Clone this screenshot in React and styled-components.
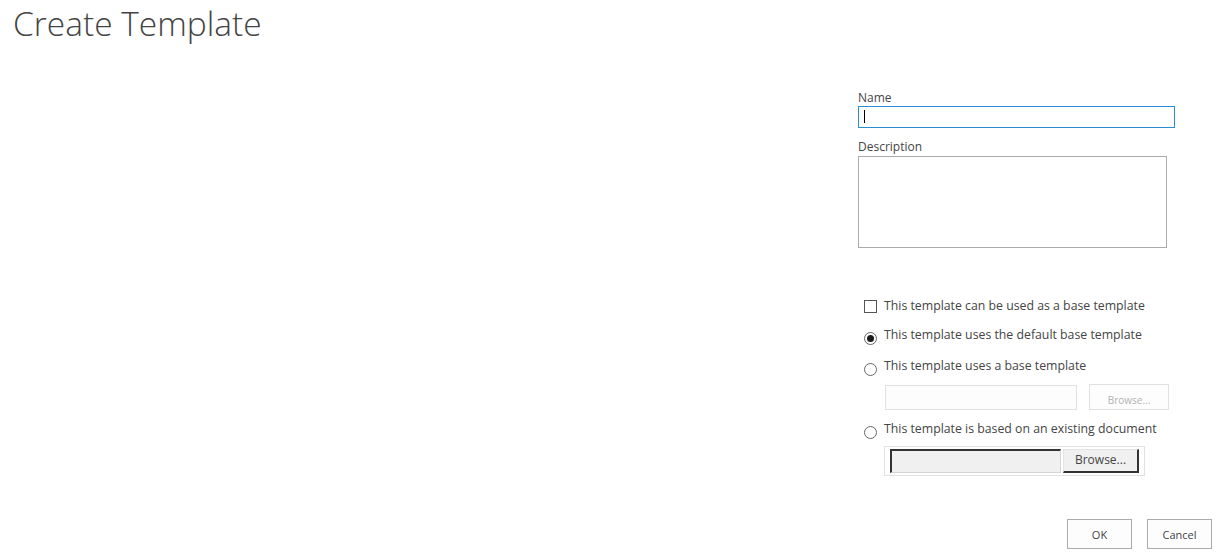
import styled, { createGlobalStyle } from "styled-components";

const GlobalStyle = createGlobalStyle`
  html, body {
    margin: 0;
    padding: 0;
    background: #ffffff;
  }
  body {
    font-family: "Open Sans", "Noto Sans", "Liberation Sans", sans-serif;
    color: #444444;
  }
`;

const Page = styled.div`
  width: 1222px;
  height: 558px;
  overflow: hidden;
  display: flex;
  flex-direction: column;
`;

const Title = styled.h1`
  margin: 0;
  padding-left: 13px;
  font-size: 33.5px;
  font-weight: 300;
  line-height: 46px;
  color: #444444;
`;

const Body = styled.div`
  display: flex;
  justify-content: flex-end;
  padding: 44px 10px 0 0;
`;

const Column = styled.div`
  width: 354px;
  display: flex;
  flex-direction: column;
`;

const Label = styled.label`
  display: block;
  font-size: 12px;
  line-height: 16px;
  margin-top: ${(p) => p.$top || 0}px;
`;

const TextBox = styled.div`
  position: relative;
  box-sizing: border-box;
  width: 317px;
  height: 22px;
  border: 1px solid #2a8dd4;
  background: #fff;
`;

const Caret = styled.span`
  position: absolute;
  left: 5px;
  top: 3px;
  width: 1px;
  height: 13px;
  background: #000;
`;

const TextArea = styled.div`
  box-sizing: border-box;
  width: 309px;
  height: 92px;
  margin-top: 1px;
  border: 1px solid #ababab;
  background: #fff;
`;

const Options = styled.div`
  display: flex;
  flex-direction: column;
  padding-left: 6px;
  margin-top: 50px;
`;

const Option = styled.div`
  display: flex;
  align-items: flex-start;
  gap: 7px;
  font-size: 12.3px;
  line-height: 16px;
  height: 16px;
  margin-top: ${(p) => p.$top || 0}px;
  color: #444;
`;

const Check = styled.span`
  box-sizing: border-box;
  width: 13px;
  height: 13px;
  margin-top: 2px;
  border: 1px solid #555;
  background: #fff;
  flex: none;
`;

const Radio = styled.span`
  box-sizing: border-box;
  width: 13px;
  height: 13px;
  margin-top: 5px;
  border: 1px solid #666;
  border-radius: 50%;
  background: #fff;
  flex: none;
  display: flex;
  align-items: center;
  justify-content: center;

  &::after {
    content: "";
    width: 7px;
    height: 7px;
    border-radius: 50%;
    background: ${(p) => (p.$checked ? "#1a1a1a" : "transparent")};
  }
`;

const SubRow = styled.div`
  display: flex;
  align-items: flex-start;
  gap: 12px;
  margin: ${(p) => p.$top || 0}px 0 0 21px;
`;

const DisabledField = styled.div`
  box-sizing: border-box;
  width: 192px;
  height: 25px;
  margin-top: 1px;
  border: 1px solid #e1e1e1;
  background: #fdfdfd;
`;

const DisabledButton = styled.div`
  box-sizing: border-box;
  width: 80px;
  height: 26px;
  border: 1px solid #e1e1e1;
  background: #fdfdfd;
  color: #b1b1b1;
  font-size: 10px;
  text-align: center;
  padding-top: 8px;
  line-height: 14px;
`;

const FileBox = styled.div`
  box-sizing: border-box;
  width: 261px;
  height: 30px;
  margin: ${(p) => p.$top || 0}px 0 0 20px;
  padding: 2px 5px 0 5px;
  border: 1px solid #e1e1e1;
  display: flex;
  gap: 2px;
`;

const FileField = styled.div`
  box-sizing: border-box;
  width: 171px;
  height: 24px;
  background: #f0f0f0;
  border-top: 2px solid #333;
  border-left: 2px solid #333;
  border-right: 1px solid #d4d4d4;
  border-bottom: 1px solid #d4d4d4;
`;

const FileButton = styled.div`
  box-sizing: border-box;
  width: 76px;
  height: 24px;
  background: #f0f0f0;
  border-top: 1px solid #e3e3e3;
  border-left: 1px solid #e3e3e3;
  border-right: 2px solid #333;
  border-bottom: 2px solid #333;
  color: #444;
  font-size: 12px;
  line-height: 20px;
  text-align: center;
`;

const Actions = styled.div`
  display: flex;
  justify-content: flex-end;
  gap: 15px;
  margin-top: 43px;
`;

const Button = styled.button`
  box-sizing: border-box;
  width: 65px;
  height: 30px;
  border: 1px solid #ababab;
  background: #fdfdfd;
  color: #444;
  font-family: inherit;
  font-size: 11px;
  padding: 0;
`;

const App = () => {
  return (
    <Page>
      <GlobalStyle />
      <Title>Create Template</Title>
      <Body>
        <Column>
          <Label>Name</Label>
          <TextBox>
            <Caret />
          </TextBox>
          <Label $top={11}>Description</Label>
          <TextArea />
          <Options>
            <Option>
              <Check />
              This template can be used as a base template
            </Option>
            <Option $top={13}>
              <Radio $checked />
              This template uses the default base template
            </Option>
            <Option $top={15}>
              <Radio />
              This template uses a base template
            </Option>
            <SubRow $top={10}>
              <DisabledField />
              <DisabledButton>Browse...</DisabledButton>
            </SubRow>
            <Option $top={11}>
              <Radio />
              This template is based on an existing document
            </Option>
            <FileBox $top={9}>
              <FileField />
              <FileButton>Browse...</FileButton>
            </FileBox>
          </Options>
          <Actions>
            <Button>OK</Button>
            <Button>Cancel</Button>
          </Actions>
        </Column>
      </Body>
    </Page>
  );
};

export default App;
